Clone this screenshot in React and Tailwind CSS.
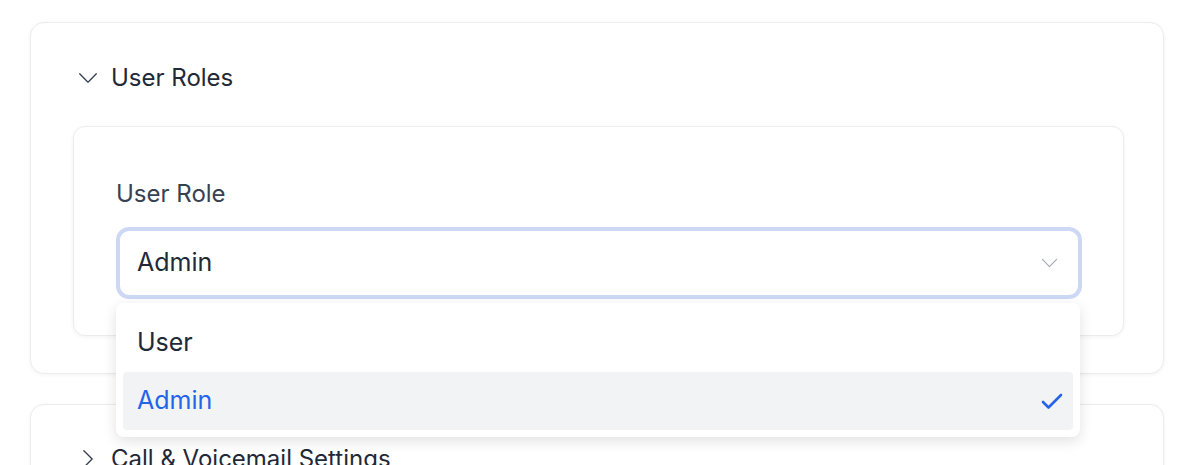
import React from "react";

const ChevronDown = ({ className }) => (
  <svg viewBox="0 0 24 14" className={className} fill="none" stroke="currentColor" strokeWidth="1.6" strokeLinecap="round" strokeLinejoin="round">
    <path d="M2 2l10 10L22 2" />
  </svg>
);

const ChevronRight = ({ className }) => (
  <svg viewBox="0 0 14 24" className={className} fill="none" stroke="currentColor" strokeWidth="1.6" strokeLinecap="round" strokeLinejoin="round">
    <path d="M2 2l10 10L2 22" />
  </svg>
);

const Check = ({ className }) => (
  <svg viewBox="0 0 22 18" className={className} fill="none" stroke="currentColor" strokeWidth="2.6" strokeLinecap="round" strokeLinejoin="round">
    <path d="M2 10l5.5 5.5L20 3" />
  </svg>
);

export default function App() {
  return (
    <div
      className="w-[1200px] h-[465px] overflow-hidden bg-white pt-[22px] pl-[30px] pr-[36px] flex flex-col gap-[30px]"
      style={{ fontFamily: "Inter, 'Noto Sans', sans-serif" }}
    >
      {/* Card 1 */}
      <div className="shrink-0 rounded-[14px] border border-[#ececec] bg-white shadow-[0_1px_4px_rgba(0,0,0,0.05)] pl-[42px] pr-[39px] pt-[40px] pb-[37px]">
        <div className="flex items-center h-[30px]">
          <ChevronDown className="w-[20px] h-[12px] text-[#374151] ml-[5px] mr-[13px]" />
          <span className="text-[24px] leading-[30px] text-[#1f2937]">User Roles</span>
        </div>
        <div className="mt-[33px] relative rounded-[12px] border border-[#ececec] bg-white shadow-[0_1px_4px_rgba(0,0,0,0.05)] pl-[42px] pr-[41px] pt-[53px] pb-[36px]">
          <div className="text-[24px] leading-[28px] text-[#374151]">User Role</div>
          <div className="relative mt-[19px]">
            <div className="h-[72px] rounded-[13px] border-[4px] border-[#cdd9f4] bg-white flex items-center pl-[17px] pr-[20px]">
              <span className="flex-1 text-[25px] text-[#1f2937]">Admin</span>
              <ChevronDown className="w-[17px] h-[10px] text-[#a3a8b1]" />
            </div>
            {/* Dropdown */}
            <div className="absolute left-0 right-[2px] top-[76px] z-10 rounded-[8px] bg-white shadow-[0_4px_14px_rgba(0,0,0,0.12)] px-[7px] pt-[11px] pb-[7px]">
              <div className="h-[58px] flex items-center pl-[14px] text-[25px] text-[#1f2937]">User</div>
              <div className="h-[58px] flex items-center pl-[14px] pr-[10px] rounded-[4px] bg-[#f2f3f5] text-[25px] text-[#2563eb]">
                <span className="flex-1">Admin</span>
                <Check className="w-[22px] h-[18px] text-[#2563eb]" />
              </div>
            </div>
          </div>
        </div>
      </div>

      {/* Card 2 */}
      <div className="shrink-0 rounded-[14px] border border-[#ececec] bg-white shadow-[0_1px_4px_rgba(0,0,0,0.05)] pl-[42px] pr-[39px] pt-[39px] pb-[38px]">
        <div className="flex items-center h-[30px]">
          <ChevronRight className="w-[12px] h-[20px] text-[#374151] ml-[9px] mr-[17px]" />
          <span className="text-[24px] leading-[30px] text-[#1f2937]">Call &amp; Voicemail Settings</span>
        </div>
      </div>
    </div>
  );
}
